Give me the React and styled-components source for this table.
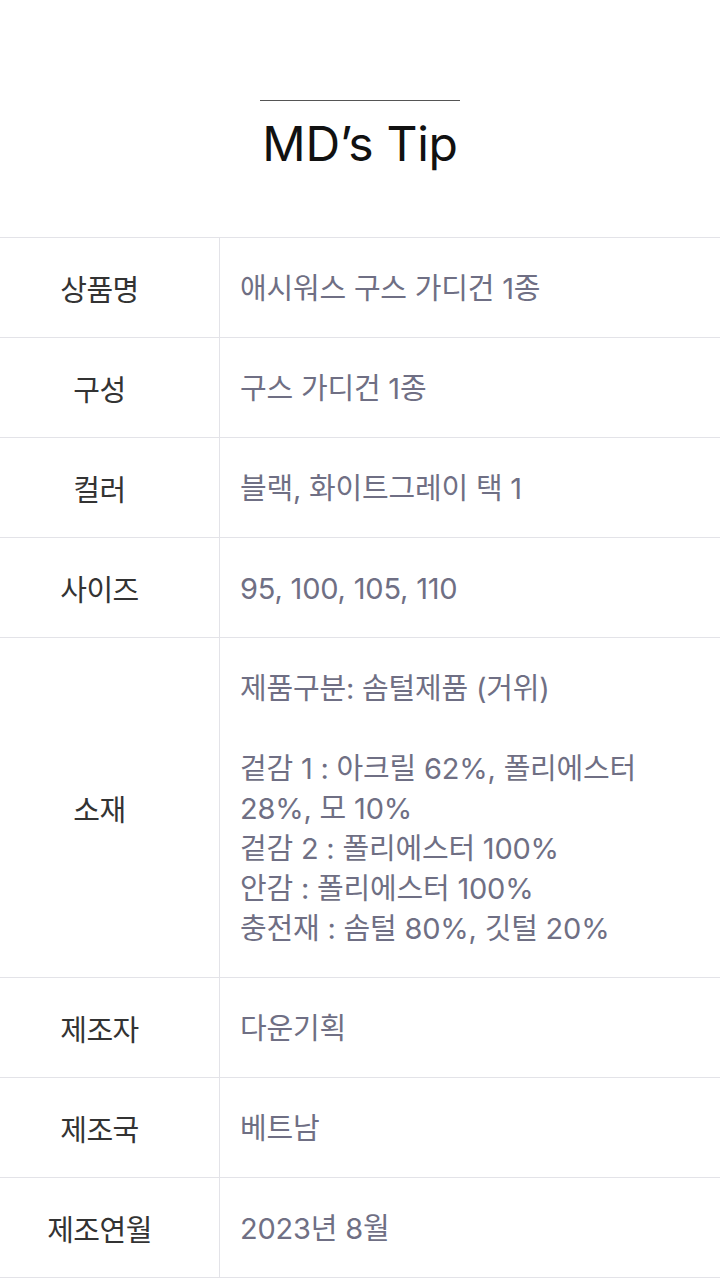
import React from "react"
import styled, { createGlobalStyle } from "styled-components"

// Styles
const GlobalStyle = createGlobalStyle`
    html, body {
        margin: 0;
        padding: 0;
        background: #ffffff;
    }

    body {
        font-family: Inter, "Noto Sans CJK KR", "Noto Sans", sans-serif;
        -webkit-font-smoothing: antialiased;
    }
`

const Page = styled.div`
    width: 720px;
    background: #ffffff;
`

const Header = styled.header`
    display: flex;
    flex-direction: column;
    align-items: center;
    padding-top: 100px;
    height: 137px;
`

const Rule = styled.span`
    display: block;
    width: 200px;
    height: 1px;
    background-color: #555555;
`

const Title = styled.h2`
    margin: 14px 0 0;
    font-family: Inter, "Noto Sans CJK KR", sans-serif;
    font-size: 48px;
    font-weight: 400;
    line-height: 58px;
    color: #111111;
    letter-spacing: -0.3px;
`

const Table = styled.dl`
    margin: 0;
    border-top: 1px solid #e3e3e8;
`

const Row = styled.div`
    display: grid;
    grid-template-columns: 220px 1fr;
    border-bottom: 1px solid #e3e3e8;
`

const Label = styled.dt`
    display: flex;
    align-items: center;
    justify-content: center;
    padding-right: 20px;
    border-right: 1px solid #e3e3e8;
    font-size: 29px;
    font-weight: 400;
    color: #333333;
    letter-spacing: -0.5px;
`

const Value = styled.dd`
    margin: 0;
    padding: 31px 20px 28px 20px;
    font-size: 29px;
    line-height: 40px;
    color: #6f6f84;
    letter-spacing: -0.2px;
    white-space: pre-line;
`

const rows = [
    { label: "상품명", value: "애시워스 구스 가디건 1종" },
    { label: "구성", value: "구스 가디건 1종" },
    { label: "컬러", value: "블랙, 화이트그레이 택 1" },
    { label: "사이즈", value: "95, 100, 105, 110" },
    {
        label: "소재",
        value:
            "제품구분: 솜털제품 (거위)\n\n겉감 1 : 아크릴 62%, 폴리에스터 28%, 모 10%\n겉감 2 : 폴리에스터 100%\n안감 : 폴리에스터 100%\n충전재 : 솜털 80%, 깃털 20%",
    },
    { label: "제조자", value: "다운기획" },
    { label: "제조국", value: "베트남" },
    { label: "제조연월", value: "2023년 8월" },
]

const App = () => {
    return (
        <Page>
            <GlobalStyle />

            <Header>
                <Rule />
                <Title>MD’s Tip</Title>
            </Header>

            <Table>
                {rows.map(row => (
                    <Row key={row.label}>
                        <Label>{row.label}</Label>
                        <Value>{row.value}</Value>
                    </Row>
                ))}
            </Table>
        </Page>
    )
}

export default App
